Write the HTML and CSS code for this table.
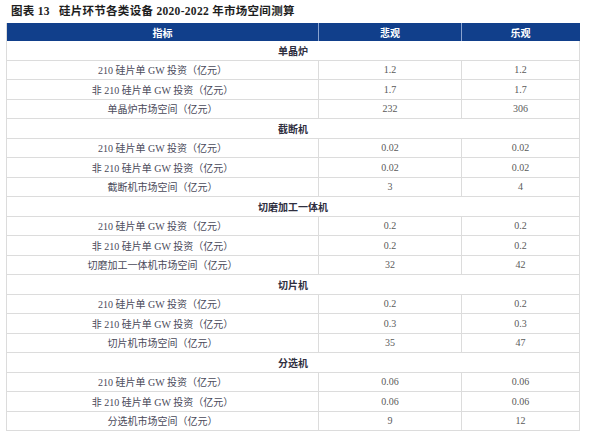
FILE: index.html
```html
<!DOCTYPE html>
<html lang="zh-CN">
<head>
<meta charset="utf-8">
<title>硅片环节各类设备市场空间测算</title>
<link rel="stylesheet" href="styles.css">
</head>
<body>
<div class="page">
  <div class="caption"><span class="fig">图表 13</span><span>硅片环节各类设备 2020-2022 年市场空间测算</span></div>
  <div class="tbl">
    <div class="th">指标</div><div class="th">悲观</div><div class="th last">乐观</div>

    <div class="sec">单晶炉</div>
    <div class="lbl">210 硅片单 GW 投资（亿元）</div><div class="num">1.2</div><div class="num">1.2</div>
    <div class="lbl">非 210 硅片单 GW 投资（亿元）</div><div class="num">1.7</div><div class="num">1.7</div>
    <div class="lbl">单晶炉市场空间（亿元）</div><div class="num">232</div><div class="num">306</div>

    <div class="sec">截断机</div>
    <div class="lbl">210 硅片单 GW 投资（亿元）</div><div class="num">0.02</div><div class="num">0.02</div>
    <div class="lbl">非 210 硅片单 GW 投资（亿元）</div><div class="num">0.02</div><div class="num">0.02</div>
    <div class="lbl">截断机市场空间（亿元）</div><div class="num">3</div><div class="num">4</div>

    <div class="sec">切磨加工一体机</div>
    <div class="lbl">210 硅片单 GW 投资（亿元）</div><div class="num">0.2</div><div class="num">0.2</div>
    <div class="lbl">非 210 硅片单 GW 投资（亿元）</div><div class="num">0.2</div><div class="num">0.2</div>
    <div class="lbl">切磨加工一体机市场空间（亿元）</div><div class="num">32</div><div class="num">42</div>

    <div class="sec">切片机</div>
    <div class="lbl">210 硅片单 GW 投资（亿元）</div><div class="num">0.2</div><div class="num">0.2</div>
    <div class="lbl">非 210 硅片单 GW 投资（亿元）</div><div class="num">0.3</div><div class="num">0.3</div>
    <div class="lbl">切片机市场空间（亿元）</div><div class="num">35</div><div class="num">47</div>

    <div class="sec">分选机</div>
    <div class="lbl">210 硅片单 GW 投资（亿元）</div><div class="num">0.06</div><div class="num">0.06</div>
    <div class="lbl">非 210 硅片单 GW 投资（亿元）</div><div class="num">0.06</div><div class="num">0.06</div>
    <div class="lbl">分选机市场空间（亿元）</div><div class="num">9</div><div class="num">12</div>
  </div>
</div>
</body>
</html>
```
FILE: styles.css
```css
html, body {
  margin: 0;
  padding: 0;
  background: #ffffff;
}
.page {
  padding: 5px 0 0 6px;
  font-family: "Liberation Serif", "Noto Sans CJK SC", serif;
}
.caption {
  height: 18px;
  padding-left: 5px;
  font-size: 11.5px;
  font-weight: bold;
  letter-spacing: 0.3px;
  color: #1e1e1e;
  line-height: 13px;
  display: flex;
  gap: 9px;
}
.tbl {
  display: grid;
  width: 574px;
  box-sizing: border-box;
  grid-template-columns: 312px 143px 118px;
  grid-template-rows: 18px;
  grid-auto-rows: 19.5px;
  border-left: 1px solid #dcdcdc;
  font-size: 10px;
}
.tbl > div {
  box-sizing: border-box;
  display: flex;
  align-items: center;
  justify-content: center;
  border-right: 1px solid #dcdcdc;
  border-bottom: 1px solid #dcdcdc;
}
.tbl > .th {
  background: #113f8b;
  color: #ffffff;
  font-weight: bold;
  border-right: 1px solid #8aa3cf;
  border-bottom: none;
}
.tbl > .th.last {
  border-right: 1px solid #113f8b;
}
.tbl > .sec {
  grid-column: 1 / 4;
  font-weight: bold;
  color: #2f2f3f;
}
.lbl {
  color: #4a4a5a;
}
.num {
  color: #5a5a5a;
}
```
